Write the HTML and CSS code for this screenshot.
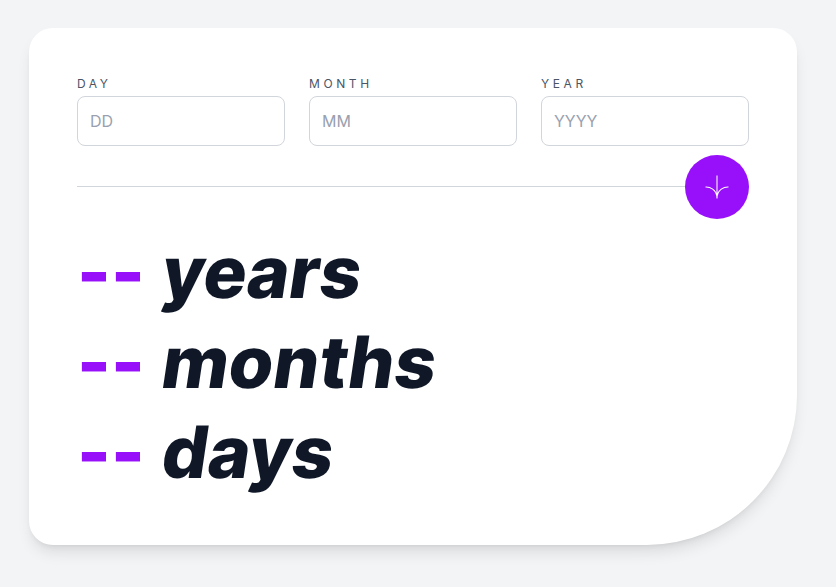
FILE: index.html
```html
<!DOCTYPE html>
<html lang="en">
<head>
<meta charset="utf-8">
<title>Age calculator</title>
<link rel="stylesheet" href="styles.css">
</head>
<body>
<main class="card">
  <form class="fields">
    <label class="field"><span class="label">DAY</span><input class="input" placeholder="DD"></label>
    <label class="field"><span class="label">MONTH</span><input class="input" placeholder="MM"></label>
    <label class="field"><span class="label">YEAR</span><input class="input" placeholder="YYYY"></label>
  </form>
  <div class="divider">
    <span class="line"></span>
    <button class="submit" type="button" aria-label="Calculate">
      <svg class="arrow" viewBox="0 0 46 44" fill="none" stroke="#fff" stroke-width="2"><path d="M1 22.019C8.333 21.686 23 25.616 23 44M23 44V0M45 22.019C37.667 21.686 23 25.616 23 44"/></svg>
    </button>
  </div>
  <section class="results">
    <p class="result"><span class="value">--</span><span class="unit">years</span></p>
    <p class="result"><span class="value">--</span><span class="unit">months</span></p>
    <p class="result"><span class="value">--</span><span class="unit">days</span></p>
  </section>
</main>
</body>
</html>
```
FILE: styles.css
```css
* { box-sizing: border-box; }
body {
  margin: 0;
  min-height: 587px;
  padding: 28px 39px 0 29px;
  background: #f3f4f6;
  font-family: Inter, "Liberation Sans", sans-serif;
  line-height: 24px;
}
.card {
  width: 768px;
  height: 517px;
  padding: 48px;
  background: #fff;
  border-radius: 24px 24px 150px 24px;
  box-shadow: 0 10px 15px -3px rgba(0,0,0,.1), 0 4px 6px -4px rgba(0,0,0,.1);
}
.fields { display: flex; gap: 24px; }
.field { flex: 1; min-width: 0; display: flex; flex-direction: column; gap: 4px; }
.label { font-size: 12px; line-height: 16px; letter-spacing: 3.6px; color: #4a5565; }
.input {
  width: 100%;
  height: 50px;
  padding: 12px;
  border: 1px solid #d1d5dc;
  border-radius: 8px;
  font: 16px/24px Inter, "Liberation Sans", sans-serif;
  background: #fff;
}
.input::placeholder { color: #99a1af; opacity: 1; }
.divider { display: flex; align-items: center; margin-top: 9px; height: 64px; }
.line { flex: 1; height: 1px; margin-bottom: 1px; background: #d1d5dc; }
.submit {
  width: 64px;
  height: 64px;
  padding: 0;
  border: 0;
  border-radius: 50%;
  background: #9810fa;
  display: grid;
  place-items: center;
}
.arrow { width: 24px; height: 24px; }
.results { margin-top: 8px; }
.result {
  margin: 0;
  display: flex;
  align-items: baseline;
  gap: 15.5px;
  height: 90px;
  font-size: 72px;
  line-height: 90px;
  font-weight: 800;
  color: #101828;
}
.value { color: #9810fa; }
.unit {
  font-family: "Inter Tight", Inter, sans-serif;
  letter-spacing: 2px;
  transform: skewX(-8.5deg);
  transform-origin: 0 71px;
}
```
